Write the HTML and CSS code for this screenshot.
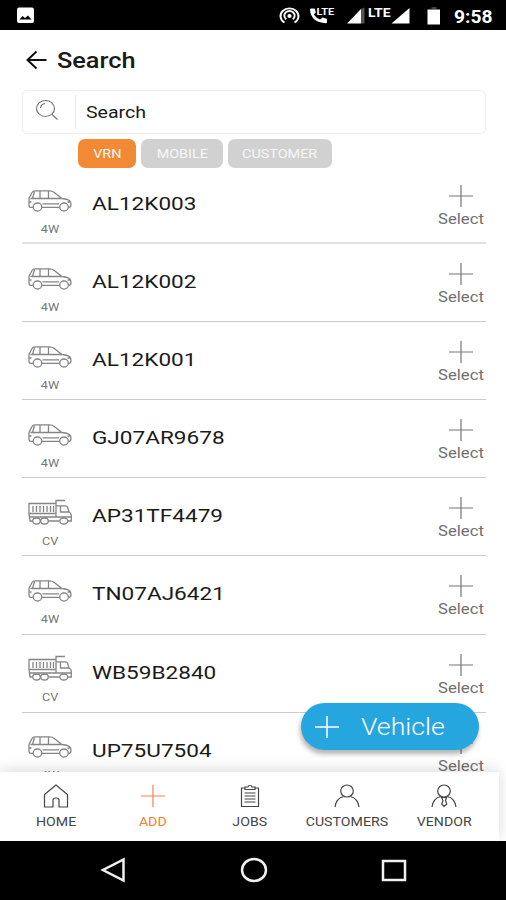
FILE: index.html
```html
<!doctype html>
<html lang="en">
<head>
  <meta charset="UTF-8">
  <meta name="viewport" content="width=device-width, initial-scale=1.0">
  <title>Search</title>
  <link rel="stylesheet" href="styles.css">
</head>
<body>
  <svg class="defs" width="0" height="0">
    <symbol id="car" viewBox="0 0 44 22">
      <path d="M5 17.300H2.500Q1 17.300 1 15V8.500L4 2.500Q4.800 .8 7 .8H21.500Q24 .8 26 2.300L34 8.500Q39 9 41.500 10.500Q43 12 43 14.500Q43 17.300 41 17.300H40.500M31.500 17.300H14M2.500 8.500H34M6.500 1.500L4.500 8.500M12 1V8.500M20.500 1V8.500M14.500 13.800H31M1 12H3.500M39.500 12H42.500"/>
      <ellipse cx="9.500" cy="17" rx="4.300" ry="4"/>
      <ellipse cx="36" cy="17" rx="4.300" ry="4"/>
    </symbol>
    <symbol id="truck" viewBox="0 0 44 26">
      <path d="M28 4.500H1V14.500H28V1.500H37M28 6.800H37.500Q39 6.800 39.500 8L41 13Q43.300 14 43.300 17V22H40M31.500 22H20.500M1 14.500L2 22H4.500M32.500 7V13H41M28 14V18H1.500M28 18H43"/>
      <path d="M5 7V13M8.500 7V13M12 7V13M15.500 7V13M19 7V13M22.500 7V13M25.500 7V13"/>
      <ellipse cx="8.500" cy="22" rx="3.800" ry="3"/>
      <ellipse cx="16.500" cy="22" rx="3.800" ry="3"/>
      <ellipse cx="35.800" cy="22" rx="4" ry="3"/>
    </symbol>
    <symbol id="plus" viewBox="0 0 24 22">
      <path d="M0 11H24M12 0V22"/>
    </symbol>
  </svg>

  <div class="statusbar">
    <svg width="506" height="30" viewBox="0 0 506 30">
      <rect x="17" y="7.500" width="17" height="15.500" rx="2" fill="#fff"/>
      <path d="M19.500 19.500L22.500 16L25 18L28 15.500L31.500 19.500Z" fill="#000"/>
      <g fill="none" stroke="#fff" stroke-width="1.900">
        <path d="M284.500 22.500A9 7.700 0 1 1 294.500 22.500"/>
        <path d="M286.300 19.200A5.200 4.600 0 1 1 292.700 19.200"/>
      </g>
      <ellipse cx="289.500" cy="16" rx="2.200" ry="2" fill="#fff"/>
      <path d="M310 9.500Q310 8.500 311.200 8.500H314Q315 8.500 315.100 9.500L315.800 12.500L313.800 14.500Q316 18 320.200 19.500L322.500 17.600L326 18.400Q327 18.600 327 19.600V22Q327 23.200 325.800 23.200Q311 22.500 310 9.500Z" fill="#fff"/>
      <path d="M347 23.500L361 9V23.500Z" fill="#fff"/>
      <path d="M361 9L364.500 7.500V23.500H361Z" fill="#555"/>
      <path d="M391.500 23.500L409.500 8V23.500Z" fill="#fff"/>
      <rect x="431.500" y="7" width="5" height="2" fill="#444"/>
      <rect x="427.500" y="9.500" width="12.500" height="15" fill="#fff"/>
      <g class="status-text">
        <text x="316.500" y="14.500" font-size="9" textLength="17.500" lengthAdjust="spacingAndGlyphs">LTE</text>
        <text x="368" y="16.500" font-size="12" textLength="22.500" lengthAdjust="spacingAndGlyphs">LTE</text>
        <text x="454" y="23" font-size="18" textLength="38.500" lengthAdjust="spacingAndGlyphs">9:58</text>
      </g>
    </svg>
  </div>

  <header>
    <svg width="21" height="20" viewBox="0 0 21 20"><path d="M10.500 1.500L1.500 10L10.500 18.500M1.500 10H20.500"/></svg>
    <h1 class="wide">Search</h1>
  </header>

  <div class="searchbox">
    <div class="searchicon">
      <svg width="24" height="22" viewBox="0 0 24 22"><ellipse cx="10.500" cy="9.500" rx="9" ry="8"/><path d="M17 15.500L22.500 20.500M5.500 9Q6 5 10 4.500"/></svg>
    </div>
    <span class="wide">Search</span>
  </div>

  <div class="chips">
    <div class="chip vrn active"><span class="wide">VRN</span></div>
    <div class="chip mobile"><span class="wide">MOBILE</span></div>
    <div class="chip customer"><span class="wide">CUSTOMER</span></div>
  </div>

  <ul class="vehicles">
    <li>
      <div class="type"><svg><use href="#car"/></svg><span class="wide">4W</span></div>
      <div class="number"><span class="wide">AL12K003</span></div>
      <div class="select"><svg><use href="#plus"/></svg><span class="wide">Select</span></div>
    </li>
    <li>
      <div class="type"><svg><use href="#car"/></svg><span class="wide">4W</span></div>
      <div class="number"><span class="wide">AL12K002</span></div>
      <div class="select"><svg><use href="#plus"/></svg><span class="wide">Select</span></div>
    </li>
    <li>
      <div class="type"><svg><use href="#car"/></svg><span class="wide">4W</span></div>
      <div class="number"><span class="wide">AL12K001</span></div>
      <div class="select"><svg><use href="#plus"/></svg><span class="wide">Select</span></div>
    </li>
    <li>
      <div class="type"><svg><use href="#car"/></svg><span class="wide">4W</span></div>
      <div class="number"><span class="wide">GJ07AR9678</span></div>
      <div class="select"><svg><use href="#plus"/></svg><span class="wide">Select</span></div>
    </li>
    <li>
      <div class="type cv"><svg><use href="#truck"/></svg><span class="wide">CV</span></div>
      <div class="number"><span class="wide">AP31TF4479</span></div>
      <div class="select"><svg><use href="#plus"/></svg><span class="wide">Select</span></div>
    </li>
    <li>
      <div class="type"><svg><use href="#car"/></svg><span class="wide">4W</span></div>
      <div class="number"><span class="wide">TN07AJ6421</span></div>
      <div class="select"><svg><use href="#plus"/></svg><span class="wide">Select</span></div>
    </li>
    <li>
      <div class="type cv"><svg><use href="#truck"/></svg><span class="wide">CV</span></div>
      <div class="number"><span class="wide">WB59B2840</span></div>
      <div class="select"><svg><use href="#plus"/></svg><span class="wide">Select</span></div>
    </li>
    <li>
      <div class="type"><svg><use href="#car"/></svg><span class="wide">4W</span></div>
      <div class="number"><span class="wide">UP75U7504</span></div>
      <div class="select"><svg><use href="#plus"/></svg><span class="wide">Select</span></div>
    </li>
  </ul>

  <div class="fab">
    <svg width="24" height="22"><use href="#plus"/></svg>
    <span class="wide">Vehicle</span>
  </div>

  <nav class="tabs">
    <div class="tab">
      <svg width="26" height="24" viewBox="0 0 26 24"><path d="M1.500 10.500L13 1L24.500 10.500V23H16V16Q16 14 13 14Q10 14 10 16V23H1.500Z"/></svg>
      <span class="wide">HOME</span>
    </div>
    <div class="tab active">
      <svg width="26" height="24" viewBox="0 0 26 24"><path d="M1 12H25M13 1V23"/></svg>
      <span class="wide">ADD</span>
    </div>
    <div class="tab">
      <svg width="26" height="24" viewBox="0 0 26 24"><path d="M8 4H4.500V22.500H21.500V4H18M8 3H11Q11 1.500 13 1.500Q15 1.500 15 3H18V5.500H8ZM7.500 9H18.500M7.500 12H18.500M7.500 15H18.500M7.500 18H18.500"/></svg>
      <span class="wide">JOBS</span>
    </div>
    <div class="tab">
      <svg width="26" height="24" viewBox="0 0 26 24"><ellipse cx="13" cy="7" rx="6.300" ry="6"/><path d="M1 23Q2 14.500 9.500 12.500M16.500 12.500Q24 14.500 25 23"/></svg>
      <span class="wide">CUSTOMERS</span>
    </div>
    <div class="tab">
      <svg width="26" height="24" viewBox="0 0 26 24"><ellipse cx="13" cy="7" rx="6.300" ry="6"/><path d="M1 23Q2 14.500 9.500 12.500M16.500 12.500Q24 14.500 25 23M10.500 13.500H15.500L14.500 16.500L15.800 20L13 22.500L10.700 20L12 16.500Z"/></svg>
      <span class="wide">VENDOR</span>
    </div>
  </nav>

  <div class="navbar">
    <svg width="26" height="26" viewBox="0 0 26 26"><path d="M23.500 2.500V23.500L3 13Z"/></svg>
    <svg width="28" height="26" viewBox="0 0 28 26"><ellipse cx="14" cy="13" rx="12" ry="11"/></svg>
    <svg width="26" height="26" viewBox="0 0 26 26"><rect x="2" y="4" width="22" height="19"/></svg>
  </div>
</body>
</html>
```

FILE: styles.css
```css
* { box-sizing: border-box; }
body { margin: 0; width: 506px; height: 900px; overflow: hidden; display: flex; flex-direction: column; position: relative; background: #fff; color: #1a1a1a; font-family: Roboto, sans-serif; }
svg { display: block; fill: none; flex: none; }
.defs { position: absolute; }

/* the typeface is set slightly extended everywhere */
.wide { display: inline-block; white-space: nowrap; transform: scaleX(1.15); }

.statusbar { height: 30px; background: #000; flex: none; }
.status-text { fill: #fff; font-weight: 700; }

header { height: 60px; padding-left: 26px; display: flex; align-items: center; gap: 10px; flex: none; }
header svg { stroke: #111; stroke-width: 2; }
h1 { margin: 2px 0 0; font-size: 22px; font-weight: 500; line-height: 30px; transform-origin: left; transform: scaleX(1.14); }

.searchbox { margin: 0 20px 0 22px; height: 44px; border: 1.5px solid #efefef; border-radius: 5px; display: flex; align-items: center; flex: none; font-size: 17px; }
.searchicon { width: 53px; height: 34px; border-right: 1px solid #e8e8e8; padding: 4px 0 0 12px; margin-right: 10px; }
.searchicon svg { stroke: #777; stroke-width: 1.2; }
.searchbox .wide { transform-origin: left; }

.chips { height: 32px; padding: 5px 0 0 78px; display: flex; gap: 5px; flex: none; }
.chip { height: 29px; border-radius: 7px; background: #d1d1d1; color: #f7f7f7; font-size: 12.500px; flex: none; display: flex; align-items: center; justify-content: center; }
.chip.active { background: #f28a35; }
.vrn { width: 58px; }
.mobile { width: 82px; }
.customer { width: 104px; }

.vehicles { list-style: none; margin: 0; padding: 0 20px 0 22px; flex: 1; overflow: hidden; }
.vehicles li { height: 78.1px; border-bottom: 1.5px solid #cbcbcb; display: flex; }
.vehicles li:first-child { border-bottom: 2px solid #e2e2e2; }
.type { width: 56px; padding-top: 23.500px; display: flex; flex-direction: column; align-items: center; color: #777; font-size: 11px; }
.type svg { width: 44px; height: 22px; stroke: #858585; stroke-width: 1.3; }
.type .wide { line-height: 14px; margin-top: 11px; }
.type.cv { padding-top: 20.500px; }
.type.cv svg { height: 26px; }
.type.cv .wide { margin-top: 10px; }
.number { flex: 1; padding: 26px 0 0 14px; font-size: 18.500px; line-height: 24px; }
.number .wide { transform-origin: left; transform: scaleX(1.22); }
.select { width: 50px; padding-top: 19px; display: flex; flex-direction: column; align-items: center; color: #707070; font-size: 14.500px; }
.select svg { width: 24px; height: 22px; stroke: #777; stroke-width: 1.2; }
.select .wide { line-height: 18px; margin-top: 4px; }

.fab { position: absolute; left: 301px; top: 703px; width: 178px; height: 47px; border-radius: 24px; background: #26a6df; color: #fff; display: flex; align-items: center; padding-left: 14px; box-shadow: -1px 4px 5px rgba(0, 0, 0, .3); font-size: 24px; font-weight: 300; }
.fab svg { stroke: #fff; stroke-width: 1.5; }
.fab .wide { margin-left: 22px; transform-origin: left; transform: scaleX(1.11); }

.tabs { height: 69px; margin-right: 7px; padding-left: 7px; background: #fff; box-shadow: 0 -2px 14px rgba(0, 0, 0, .14); display: flex; flex: none; position: relative; }
.tab { width: 97.200px; flex: none; padding-top: 12px; display: flex; flex-direction: column; align-items: center; color: #444; font-size: 12px; }
.tab svg { stroke: #444; stroke-width: 1.2; }
.tab .wide { line-height: 16px; margin-top: 6px; transform: scaleX(1.18); }
.tab.active { color: #f5822a; }
.tab.active svg { stroke: #f5824a; }

.navbar { height: 59px; background: #000; flex: none; display: flex; justify-content: space-between; padding: 16px 99px 0 100px; position: relative; }
.navbar svg { stroke: #f0f0f0; stroke-width: 2.5; }
```
